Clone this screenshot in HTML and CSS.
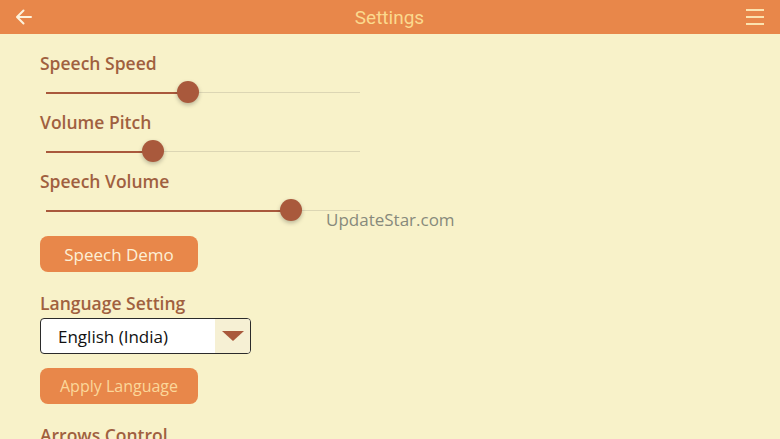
FILE: index.html
```html
<!DOCTYPE html>
<html lang="en">
<head>
    <meta charset="UTF-8">
    <meta name="viewport" content="width=device-width, initial-scale=1.0">
    <title>Settings</title>
    <link rel="stylesheet" href="styles.css">
</head>
<body>
    <header class="topbar">
        <button class="icon-btn" aria-label="Back">
            <svg width="20" height="20" viewBox="0 0 20 20"><path d="M17 10H3.5M9.5 3.5L3 10l6.5 6.5" fill="none" stroke="#fdf3dc" stroke-width="2" stroke-linecap="round" stroke-linejoin="round"/></svg>
        </button>
        <h1 class="title">Settings</h1>
        <button class="icon-btn" aria-label="Menu">
            <svg width="20" height="20" viewBox="0 0 20 20"><path d="M1 3h18M1 10h18M1 17h18" stroke="#fbe3b0" stroke-width="2.2"/></svg>
        </button>
    </header>

    <main class="content">
        <div class="label">Speech Speed</div>
        <div class="slider">
            <div class="track"></div>
            <div class="fill" style="width: 45.2%"></div>
            <div class="thumb" style="left: 45.2%"></div>
        </div>

        <div class="label">Volume Pitch</div>
        <div class="slider">
            <div class="track"></div>
            <div class="fill" style="width: 34.1%"></div>
            <div class="thumb" style="left: 34.1%"></div>
        </div>

        <div class="label">Speech Volume</div>
        <div class="slider">
            <div class="track"></div>
            <div class="fill" style="width: 78%"></div>
            <div class="thumb" style="left: 78%"></div>
        </div>

        <button class="btn demo">Speech Demo</button>

        <div class="label lang-label">Language Setting</div>
        <div class="select">
            <span class="select-text">English (India)</span>
            <span class="select-arrow"></span>
        </div>

        <button class="btn apply">Apply Language</button>

        <div class="label lang-label">Arrows Control</div>
    </main>

    <div class="watermark">UpdateStar.com</div>
</body>
</html>
```

FILE: styles.css
```css
body {
    margin: 0;
    padding: 0;
    background-color: #f8f2c9;
    font-family: "Open Sans", Arial, sans-serif;
    width: 780px;
    height: 439px;
    overflow: hidden;
    position: relative;
}

.topbar {
    height: 34px;
    background-color: #e8874a;
    display: flex;
    align-items: center;
    justify-content: space-between;
    padding: 0 14px 0 13px;
}

.icon-btn {
    background: none;
    border: none;
    padding: 0;
    width: 22px;
    height: 22px;
    display: flex;
    align-items: center;
    justify-content: center;
}

.title {
    margin: 0;
    font-family: Roboto, Arial, sans-serif;
    font-weight: 400;
    font-size: 19px;
    color: #fbd98e;
}

.content {
    padding: 17px 0 0 40px;
}

.label {
    height: 24px;
    line-height: 24px;
    font-size: 17.5px;
    font-weight: 600;
    color: #a0603f;
}

.slider {
    position: relative;
    height: 35px;
    width: 314px;
    margin-left: 6px;
}

.track,
.fill {
    position: absolute;
    left: 0;
    top: 17px;
    height: 1px;
}

.track {
    width: 100%;
    background-color: #dcd6b4;
}

.fill {
    height: 2px;
    top: 16.5px;
    background-color: #a9593c;
}

.thumb {
    position: absolute;
    top: 17px;
    width: 22px;
    height: 22px;
    margin: -11px 0 0 -11px;
    border-radius: 50%;
    background-color: #a9593c;
    box-shadow: 0 2px 4px rgba(0, 0, 0, 0.25);
}

.btn {
    display: block;
    width: 158px;
    height: 36px;
    border: none;
    border-radius: 8px;
    background-color: #e8874a;
    font-family: "Open Sans", Arial, sans-serif;
    font-size: 17px;
    padding: 0;
}

.demo {
    margin-top: 8px;
    color: #fdf0d6;
}

.apply {
    margin-top: 14px;
    font-size: 16px;
    color: #fbd79a;
}

.lang-label {
    margin-top: 19px;
}

.select {
    margin-top: 3px;
    width: 209px;
    height: 34px;
    border: 1px solid #2b2b2b;
    border-radius: 4px;
    background-color: #ffffff;
    display: flex;
    align-items: center;
    overflow: hidden;
}

.select-text {
    flex: 1;
    padding-left: 17px;
    font-family: "Open Sans", Arial, sans-serif;
    font-size: 17px;
    color: #111;
}

.select-arrow {
    width: 35px;
    height: 100%;
    background-color: #f6f0d4;
    display: flex;
    align-items: center;
    justify-content: center;
}

.select-arrow::after {
    content: "";
    border-left: 11px solid transparent;
    border-right: 11px solid transparent;
    border-top: 10px solid #a9593c;
}

.watermark {
    position: absolute;
    left: 326px;
    top: 208px;
    font-family: "Open Sans", Arial, sans-serif;
    font-size: 17px;
    color: #878a7c;
}
```
